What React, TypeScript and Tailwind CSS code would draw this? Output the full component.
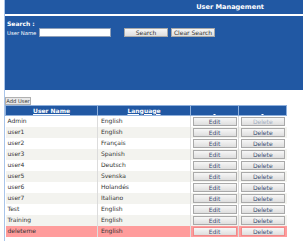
import React from "react";

const users = [
  { name: "Admin", lang: "English", locked: true },
  { name: "user1", lang: "English" },
  { name: "user2", lang: "Français" },
  { name: "user3", lang: "Spanish" },
  { name: "user4", lang: "Deutsch" },
  { name: "user5", lang: "Svenska" },
  { name: "user6", lang: "Holandés" },
  { name: "user7", lang: "Italiano" },
  { name: "Test", lang: "English" },
  { name: "Training", lang: "English" },
  { name: "deleteme", lang: "English", marked: true },
];

function Btn({ label, faded, pink, className }: { label: string; faded?: boolean; pink?: boolean; className?: string }) {
  return (
    <button
      className={
        "block h-[9px] leading-[7px] bg-gradient-to-b from-[#f7f7f7] to-[#dedede] border text-center whitespace-nowrap " +
        (pink ? "border-[#f08a8a] " : "border-[#a9a9a9] ") +
        (faded ? "text-[#a4aec0] " : "text-[#3d4f73] ") +
        (className ?? "")
      }
    >
      {label}
    </button>
  );
}

export default function App() {
  return (
    <div className="w-[303px] h-[241px] overflow-hidden bg-white font-['DejaVu_Sans',sans-serif] text-[6px] leading-[8px] text-[#333] whitespace-nowrap">
      <div className="ml-[4px] h-full border-l border-[#a9c5ea]">
        <div className="h-[14px] bg-[#2158a3] flex items-center justify-end pr-[39px] text-white font-bold text-[6.6px]">
          User Management
        </div>
        <div className="h-[2px] bg-white" />
        <div className="h-[74px] bg-[#2158a3] pl-[2px] pt-[3px] text-white">
          <div className="font-bold h-[9px] leading-[9px]">Search :</div>
          <div className="flex items-center">
            <span className="w-[32px] text-[5.3px]">User Name</span>
            <input className="w-[72px] h-[9px] bg-white border border-[#8f9fb8]" />
            <Btn label="Search" className="ml-[13px] w-[44px] !text-[#333]" />
            <Btn label="Clear Search" className="ml-[3px] w-[44px] !text-[#333]" />
          </div>
        </div>
        <div className="pt-[7px] h-[15px]">
          <button className="block h-[8px] w-[26px] leading-[6px] text-[5.2px] bg-[#e8e8e8] border border-[#b0b0b0] text-[#333]">Add User</button>
        </div>
        <table className="w-[281px] border-collapse table-fixed">
          <colgroup>
            <col className="w-[92px]" />
            <col className="w-[93px]" />
            <col className="w-[48px]" />
            <col className="w-[48px]" />
          </colgroup>
          <thead>
            <tr className="bg-[#2158a3] text-white font-bold">
              <th className="h-[10px] p-0 border border-[#8fb0dc] underline">User Name</th>
              <th className="h-[10px] p-0 border border-[#8fb0dc] underline">Language</th>
              <th className="h-[10px] p-0 border border-[#8fb0dc] underline">{"\u00a0"}</th>
              <th className="h-[10px] p-0 border border-[#8fb0dc] underline">{"\u00a0"}</th>
            </tr>
          </thead>
          <tbody>
            {users.map((u, i) => (
              <tr
                key={u.name}
                className={u.marked ? "bg-[#ff9c9c]" : i % 2 === 1 ? "bg-[#f3f3ef]" : "bg-white"}
              >
                <td className="h-[11px] p-0 pl-[2px] border-r border-[#dcdcdc]">{u.name}</td>
                <td className="h-[11px] p-0 pl-[3px] border-r border-[#dcdcdc]">{u.lang}</td>
                <td className="h-[11px] p-0 border-r border-[#dcdcdc]">
                  <Btn label="Edit" pink={u.marked} className="w-[44px] mx-auto" />
                </td>
                <td className="h-[11px] p-0">
                  <Btn label="Delete" pink={u.marked} faded={u.locked} className="w-[44px] mx-auto" />
                </td>
              </tr>
            ))}
          </tbody>
        </table>
      </div>
    </div>
  );
}
